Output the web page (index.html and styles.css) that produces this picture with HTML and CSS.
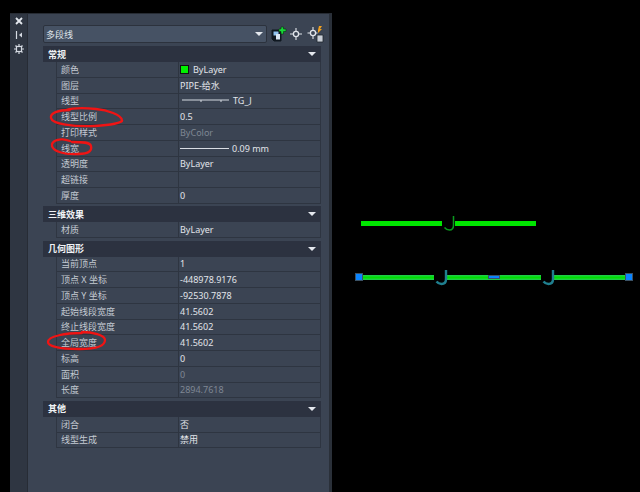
FILE: index.html
```html
<!DOCTYPE html>
<html lang="zh">
<head>
<meta charset="utf-8">
<title>特性</title>
<link rel="stylesheet" href="styles.css">
</head>
<body>
<div class="palette">
  <div class="strip">
    <svg class="strip-icon" width="12" height="12" viewBox="0 0 12 12"><path d="M3 3l6 6M9 3l-6 6" stroke="#e4e8ee" stroke-width="1.800"/></svg>
    <svg class="strip-icon" width="12" height="12" viewBox="0 0 12 12"><path d="M3.500 2v8" stroke="#d5dae2" stroke-width="1.200"/><path d="M9 3.500L6 6l3 2.500z" fill="#d5dae2"/></svg>
    <svg class="strip-icon" width="12" height="12" viewBox="0 0 12 12"><rect x="3.500" y="3.500" width="5" height="5" fill="none" stroke="#d5dae2" stroke-width="1.200"/><path d="M6 1v2M6 9v2M1 6h2M9 6h2M2.500 2.500l1.500 1.500M8 8l1.500 1.500M9.500 2.500L8 4M4 8L2.500 9.500" stroke="#d5dae2" stroke-width="1.200"/></svg>
  </div>
  <div class="main">
    <div class="toolbar">
      <div class="combo"><span>多段线</span><i class="caret"></i></div>
      <div class="tools">
        <svg width="18" height="18" viewBox="0 0 18 18"><path d="M3 5h7l2 2v9H5l-2-2z" fill="#0f1720" stroke="#101820"/><path d="M4.500 6.500h5v4h-5z" fill="#8fc2ee"/><path d="M7 9h4v5.500H7z" fill="#d9e6f2"/><path d="M10 4h2V2h2.500v2h2.500v2.500h-2.500V9H12V6.500h-2z" fill="#18d838" stroke="#06380f" stroke-width=".6"/></svg>
        <svg width="18" height="18" viewBox="0 0 18 18"><circle cx="9" cy="9" r="2.600" fill="none" stroke="#e0e4ea" stroke-width="1.300"/><path d="M9 3V6M9 12v3M3 9H6M12 9h3" stroke="#e0e4ea" stroke-width="1.100"/></svg>
        <svg width="20" height="20" viewBox="0 0 20 20"><circle cx="8" cy="9" r="2.600" fill="none" stroke="#e0e4ea" stroke-width="1.300"/><path d="M8 3v3M8 12v3M2.500 9H5M11 9h1.500" stroke="#e0e4ea" stroke-width="1.100"/><path d="M13 6l1-4h3l-2 3h2l-4 4z" fill="#f0a020"/><path d="M12 11h6v7h-6z" fill="#c9ced6" stroke="#20262e" stroke-width=".8"/></svg>
      </div>
    </div>

    <section class="group">
      <header class="group-head"><span>常规</span><i class="caret"></i></header>
      <div class="rows">
        <div class="row"><span>颜色</span><span class="val"><i class="swatch"></i>ByLayer</span></div>
        <div class="row"><span>图层</span><span class="val">PIPE-给水</span></div>
        <div class="row"><span>线型</span><span class="val"><svg class="ltype" width="50" height="6" viewBox="0 0 50 6"><path d="M2 2h19v2M21 2h20v2M41 2h8" fill="none" stroke="#d5dae2"/></svg>TG_J</span></div>
        <div class="row"><span>线型比例</span><span class="val">0.5</span></div>
        <div class="row"><span>打印样式</span><span class="val dim">ByColor</span></div>
        <div class="row"><span>线宽</span><span class="val"><i class="lweight"></i>0.09 mm</span></div>
        <div class="row"><span>透明度</span><span class="val">ByLayer</span></div>
        <div class="row"><span>超链接</span><span class="val"></span></div>
        <div class="row"><span>厚度</span><span class="val">0</span></div>
      </div>
    </section>

    <section class="group">
      <header class="group-head"><span>三维效果</span><i class="caret"></i></header>
      <div class="rows">
        <div class="row"><span>材质</span><span class="val">ByLayer</span></div>
      </div>
    </section>

    <section class="group">
      <header class="group-head"><span>几何图形</span><i class="caret"></i></header>
      <div class="rows">
        <div class="row"><span>当前顶点</span><span class="val">1</span></div>
        <div class="row"><span>顶点 X 坐标</span><span class="val">-448978.9176</span></div>
        <div class="row"><span>顶点 Y 坐标</span><span class="val">-92530.7878</span></div>
        <div class="row"><span>起始线段宽度</span><span class="val">41.5602</span></div>
        <div class="row"><span>终止线段宽度</span><span class="val">41.5602</span></div>
        <div class="row"><span>全局宽度</span><span class="val">41.5602</span></div>
        <div class="row"><span>标高</span><span class="val">0</span></div>
        <div class="row"><span>面积</span><span class="val dim">0</span></div>
        <div class="row"><span>长度</span><span class="val dim">2894.7618</span></div>
      </div>
    </section>

    <section class="group">
      <header class="group-head"><span>其他</span><i class="caret"></i></header>
      <div class="rows">
        <div class="row"><span>闭合</span><span class="val">否</span></div>
        <div class="row"><span>线型生成</span><span class="val">禁用</span></div>
      </div>
    </section>
  </div>
</div>

<svg class="canvas" width="308" height="492" viewBox="332 0 308 492">
  <g fill="#00e600">
    <rect x="361" y="221" width="81" height="5"/>
    <rect x="455" y="221" width="81" height="5"/>
  </g>
  <path d="M453.500 216v9q0 5-4 5-3 0-5-2.500" fill="none" stroke="#0a9a1e" stroke-width="1.500"/>
  <g fill="#1fcf46">
    <rect x="363" y="275" width="71" height="5"/>
    <rect x="446" y="275" width="95" height="5"/>
    <rect x="554" y="275" width="71" height="5"/>
  </g>
  <g fill="#00e000">
    <rect x="363" y="276.500" width="71" height="2"/>
    <rect x="446" y="276.500" width="95" height="2"/>
    <rect x="554" y="276.500" width="71" height="2"/>
  </g>
  <g fill="none" stroke="#1f7f8f" stroke-width="2.400">
    <path d="M446 270v9q0 5-4.500 5-3 0-5-2.500"/>
    <path d="M553 270v9q0 5-4.500 5-3 0-5-2.500"/>
  </g>
  <g fill="#0a84ff" stroke="#3b5266">
    <rect x="355.500" y="273.500" width="7" height="7"/>
    <rect x="625.500" y="273.500" width="7" height="7"/>
    <rect x="488.500" y="275.500" width="11" height="3"/>
  </g>
</svg>

<svg class="marks" width="640" height="492" viewBox="0 0 640 492">
  <g fill="none" stroke="#f01414" stroke-width="2.300" stroke-linecap="round">
    <path d="M70 110C58 110 50 113 51 118C52 124 74 127 95 126C110 125 123 123 122 120C121 115 108 110 96 109C86 108 76 107 66 110"/>
    <path d="M70 141C60 137 51 141 52 146C53 151 64 155 78 154C90 154 92 150 91 146C90 142 82 142 72 142"/>
    <path d="M82 333C66 333 48 336 48 342C48 347 62 349 80 349C95 349 105 347 105 340C105 335 92 332 82 332"/>
  </g>
</svg>
</body>
</html>
```
FILE: styles.css
```css
* { box-sizing: border-box; }
html, body { margin: 0; height: 100%; }
body {
  position: relative;
  display: flex;
  align-items: flex-start;
  width: 640px;
  height: 492px;
  overflow: hidden;
  background: #000;
  font: 9px/1 "Noto Sans", "Noto Sans CJK SC", sans-serif;
  color: #d9dde3;
}
.palette {
  display: flex;
  flex: none;
  width: 322px;
  height: 479px;
  margin: 13px 0 0 10px;
  background: #3b4453;
  border-top: 1px solid #262b33;
  border-right: 3px solid #2a3039;
}
.strip {
  flex: none;
  display: flex;
  flex-direction: column;
  align-items: center;
  gap: 2px;
  width: 18px;
  padding-top: 1px;
  background: #2f3642;
  border-right: 1px solid #272c35;
}
.strip-icon { display: block; }
.main {
  flex: 1;
  min-width: 0;
  padding: 11px 8px 0 15px;
}
.toolbar {
  display: flex;
  align-items: center;
  height: 18px;
  margin-bottom: 3px;
}
.combo {
  flex: none;
  display: flex;
  align-items: center;
  justify-content: space-between;
  width: 224px;
  height: 18px;
  padding: 0 3px 0 2px;
  background: #465264;
  border: 1px solid #2c323d;
  border-radius: 2px;
  color: #dfe3e8;
}
.tools {
  flex: none;
  display: flex;
  align-items: center;
  gap: 0;
  margin-left: 2px;
}
.caret {
  width: 0;
  height: 0;
  border-left: 4px solid transparent;
  border-right: 4px solid transparent;
  border-top: 4px solid #e4e8ee;
}
.group { margin-bottom: 2.500px; }
.group-head {
  display: flex;
  align-items: center;
  justify-content: space-between;
  height: 16px;
  padding: 0 5px 0 5px;
  background: #2c3240;
  color: #f0f2f5;
  font-weight: 700;
}
.rows { margin-left: 13px; border-left: 1px solid #2f3642; }
.row {
  display: grid;
  grid-template-columns: 121px 1fr;
  height: 15.750px;
  align-items: center;
  border-bottom: 1px solid #2e3541;
  border-right: 1px solid #2e3541;
  color: #c4cad2;
}
.row > span { padding-left: 4px; white-space: nowrap; }
.row > .val {
  display: flex;
  align-items: center;
  height: 100%;
  padding-left: 1px;
  border-left: 1px solid #2e3541;
  color: #e2e5ea;
}
.row > .dim { color: #7f8793; }
.swatch {
  flex: none;
  width: 9px;
  height: 9px;
  margin-right: 4px;
  background: #00f000;
  border: 1px solid #111;
}
.ltype { flex: none; margin-right: 3px; }
.lweight {
  flex: none;
  width: 49px;
  height: 1px;
  margin-right: 3px;
  background: #d9dde3;
}
.canvas { flex: none; display: block; }
.marks {
  position: absolute;
  left: 0;
  top: 0;
  pointer-events: none;
}
```
